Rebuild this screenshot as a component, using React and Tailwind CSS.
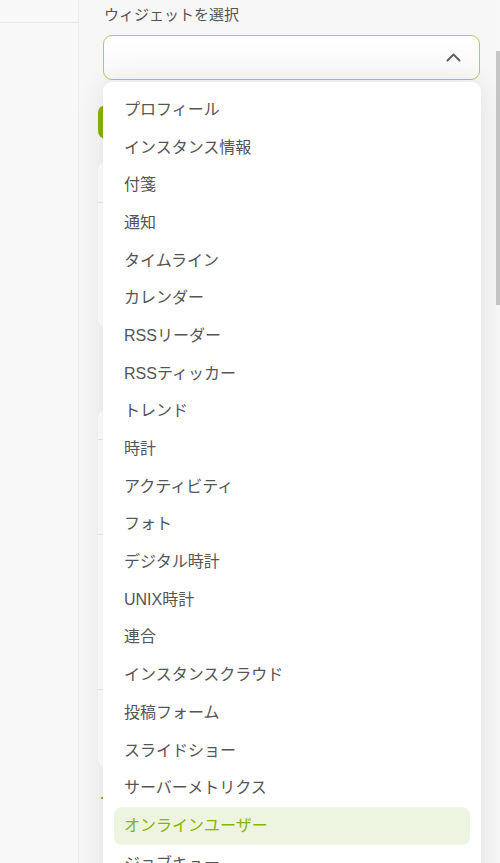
import React from "react";

const items = [
  "プロフィール",
  "インスタンス情報",
  "付箋",
  "通知",
  "タイムライン",
  "カレンダー",
  "RSSリーダー",
  "RSSティッカー",
  "トレンド",
  "時計",
  "アクティビティ",
  "フォト",
  "デジタル時計",
  "UNIX時計",
  "連合",
  "インスタンスクラウド",
  "投稿フォーム",
  "スライドショー",
  "サーバーメトリクス",
  "オンラインユーザー",
  "ジョブキュー",
  "ボタン",
];

const font = {
  fontFamily: '"Liberation Sans", "Noto Sans CJK JP", sans-serif',
};

export default function App() {
  return (
    <div
      className="flex h-[863px] w-[500px] overflow-hidden bg-[#f7f7f7]"
      style={font}
    >
      {/* left sidebar */}
      <aside className="w-[79px] shrink-0 border-r border-[#ebebeb] bg-[#f8f8f8]">
        <div className="h-[23px] border-b border-[#e9e9e9]" />
      </aside>

      {/* main */}
      <main className="relative flex-1 pl-[24px] pr-[16px]">
        <div className="pt-[4px] pl-[1px] text-[15px] leading-[22px] text-[#555555]">
          ウィジェットを選択
        </div>
        <div className="mt-[9px] flex h-[45px] items-center justify-end rounded-[9px] border border-[#a8cf60] bg-gradient-to-b from-white to-[#f9f9f9] pr-[18px]">
          <svg width="15" height="9" viewBox="0 0 15 9" fill="none">
            <polyline
              points="1.5,7.5 7.5,1.5 13.5,7.5"
              stroke="#606060"
              strokeWidth="2"
              strokeLinecap="round"
              strokeLinejoin="round"
            />
          </svg>
        </div>

        {/* content behind the dropdown */}
        <div className="ml-[-5px] mt-[25px] flex flex-col">
          <div className="h-[34px] w-[120px] rounded-lg bg-[#86b300]" />
          <div className="mt-[23px] flex h-[165px] flex-col rounded-lg bg-white">
            <div className="h-[41px] border-b border-[#ececec]" />
          </div>
          <div className="mt-[83px] flex h-[357px] flex-col rounded-lg bg-white">
            <div className="h-[30px] border-b border-[#ececec]" />
            <div className="h-[95px] border-b border-[#ececec]" />
            <div className="h-[155px] border-b border-[#ececec]" />
          </div>
          <div className="ml-[3px] mt-[30px] h-[2px] w-[2px] bg-[#86b300]" />
        </div>

        {/* dropdown */}
        <div className="absolute left-[24px] top-[82px] w-[378px] rounded-[9px] bg-white px-[11px] pt-[9px] pb-[8px] shadow-[0_0_30px_rgba(0,0,0,0.09)]">
          {items.map((t) => {
            const active = t === "オンラインユーザー";
            return (
              <div
                key={t}
                className={
                  active
                    ? "flex h-[37.7px] items-center rounded-lg bg-[#edf4e0] px-[10px] text-[16px] text-[#86b300]"
                    : "flex h-[37.7px] items-center px-[10px] text-[16px] text-[#555555]"
                }
              >
                {t}
              </div>
            );
          })}
        </div>
      </main>

      {/* scrollbar */}
      <div className="w-[4px] shrink-0 bg-[#f8f8f8]">
        <div className="mt-[51px] h-[254px] w-[4px] bg-[#c6c6c6]" />
      </div>
    </div>
  );
}
